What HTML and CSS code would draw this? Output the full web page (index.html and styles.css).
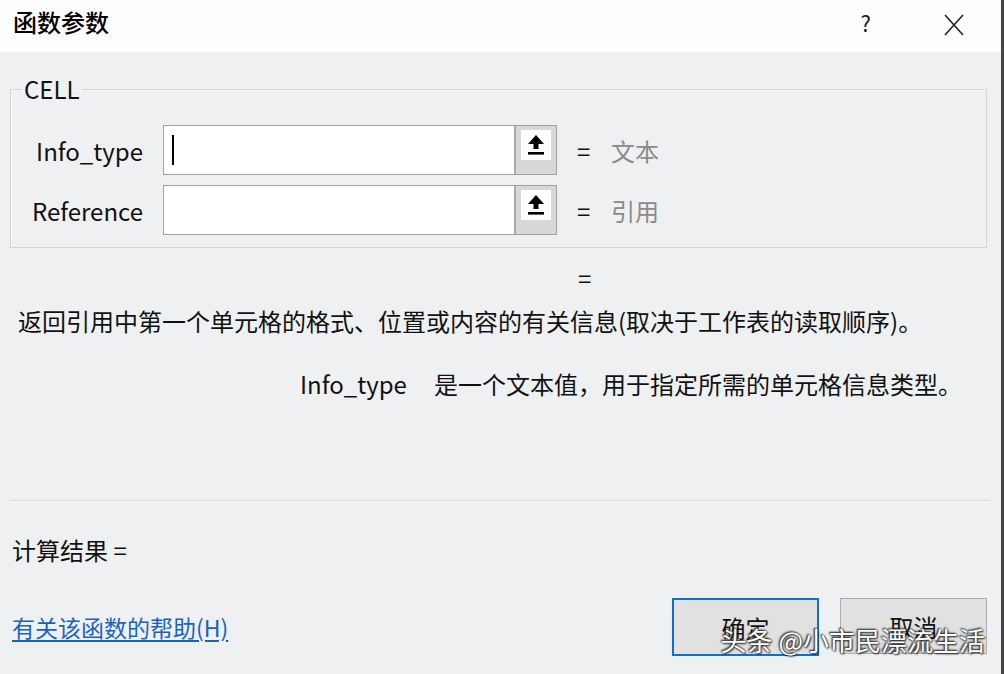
FILE: index.html
```html
<!DOCTYPE html>
<html lang="zh-CN">
<head>
    <meta charset="UTF-8">
    <meta name="viewport" content="width=device-width, initial-scale=1.0">
    <title>函数参数</title>
    <link rel="stylesheet" href="styles.css">
</head>
<body>
    <div class="dialog">
        <div class="titlebar">
            <span class="title">函数参数</span>
            <span class="help">?</span>
            <span class="close">
                <svg width="22" height="22" viewBox="0 0 22 22"><path d="M2 1 L20 21 M20 1 L2 21" stroke="#222" stroke-width="1.6" fill="none"/></svg>
            </span>
        </div>

        <div class="content">
            <fieldset class="args">
                <legend>CELL</legend>
                <div class="row">
                    <label>Info_type</label>
                    <div class="field">
                        <div class="input"><span class="caret"></span></div>
                        <button class="pick"><span class="pick-face">
                            <svg width="18" height="22" viewBox="0 0 18 22"><path d="M9 1 L17 10 L11.5 10 L11.5 15 L6.5 15 L6.5 10 L1 10 Z" fill="#000"/><rect x="1" y="18" width="16" height="2.6" fill="#000"/></svg>
                        </span></button>
                    </div>
                    <span class="eq">=</span>
                    <span class="val">文本</span>
                </div>
                <div class="row">
                    <label>Reference</label>
                    <div class="field">
                        <div class="input"></div>
                        <button class="pick"><span class="pick-face">
                            <svg width="18" height="22" viewBox="0 0 18 22"><path d="M9 1 L17 10 L11.5 10 L11.5 15 L6.5 15 L6.5 10 L1 10 Z" fill="#000"/><rect x="1" y="18" width="16" height="2.6" fill="#000"/></svg>
                        </span></button>
                    </div>
                    <span class="eq">=</span>
                    <span class="val">引用</span>
                </div>
            </fieldset>

            <div class="result-eq">=</div>
            <p class="desc">返回引用中第一个单元格的格式、位置或内容的有关信息(取决于工作表的读取顺序)。</p>
            <p class="arg-desc"><span class="arg-name">Info_type</span><span>是一个文本值，用于指定所需的单元格信息类型。</span></p>

            <div class="sep"></div>

            <div class="calc">计算结果 =</div>

            <div class="footer">
                <a href="#" class="help-link">有关该函数的帮助(H)</a>
                <div class="buttons">
                    <button class="btn btn-ok">确定</button>
                    <button class="btn">取消</button>
                </div>
            </div>

            <div class="watermark">头条 @小市民漂流生活</div>
        </div>
    </div>
</body>
</html>
```

FILE: styles.css
```css
html, body {
    margin: 0;
    padding: 0;
}
body {
    font-family: "Noto Sans CJK SC", "Noto Sans", sans-serif;
    font-size: 24px;
    color: #111;
    background: #eff0f2;
}
.dialog {
    width: 1001px;
    height: 674px;
    border-right: 3px solid #4b4248;
    display: flex;
    flex-direction: column;
    overflow: hidden;
}

/* barra de titulo */
.titlebar {
    height: 52px;
    background: #fefefe;
    display: flex;
    align-items: flex-start;
    padding-top: 7px;
    box-sizing: border-box;
    line-height: 30px;
}
.title {
    margin-left: 13px;
    font-size: 24px;
    font-weight: 500;
    color: #000;
    flex: 1;
}
.help {
    font-size: 22px;
    color: #222;
    margin-right: 72px;
}
.close {
    margin-right: 36px;
    padding-top: 4px;
}

.content {
    flex: 1;
    position: relative;
    background: #eff0f2;
    padding: 0 14px 0 10px;
}

/* grupo de argumentos */
.args {
    margin: 22px 0 0 0;
    padding: 21px 0 12px 0;
    width: 977px;
    box-sizing: border-box;
    border: 1px solid #d3d4d6;
    box-shadow: inset 1px 1px 0 #f8f8f8;
}
.args legend {
    margin-left: 11px;
    padding: 0 2px;
    line-height: 30px;
    font-size: 24px;
    color: #111;
}
.row {
    display: flex;
    align-items: center;
    height: 50px;
}
.row + .row {
    margin-top: 10px;
}
.row label {
    width: 132px;
    text-align: right;
    margin-right: 20px;
}
.field {
    width: 394px;
    height: 50px;
    display: flex;
    box-sizing: border-box;
    border: 1px solid #a2a2a2;
    background: #fff;
}
.input {
    flex: 1;
    display: flex;
    align-items: center;
    padding-left: 8px;
}
.caret {
    width: 2px;
    height: 30px;
    background: #000;
}
.pick {
    width: 42px;
    height: 48px;
    padding: 0;
    border: none;
    border-left: 2px solid #a9a9a9;
    background: #d8d8d9;
    display: flex;
    justify-content: center;
    align-items: flex-start;
}
.pick-face {
    margin-top: 4px;
    width: 30px;
    height: 30px;
    background: #fff;
    display: flex;
    justify-content: center;
    align-items: center;
}
.eq {
    margin-left: 20px;
    width: 34px;
}
.val {
    color: #8a8a8a;
}

.result-eq {
    margin: 15px 0 0 568px;
    line-height: 30px;
}
.desc {
    margin: 13px 0 0 8px;
    line-height: 30px;
}
.arg-desc {
    margin: 33px 0 0 290px;
    line-height: 30px;
}
.arg-name {
    margin-right: 27px;
}

.sep {
    margin-top: 101px;
    width: 980px;
    height: 1px;
    background: #d6d7d9;
    border-bottom: 1px solid #f8f8f8;
}

.calc {
    margin: 33px 0 0 2px;
    line-height: 30px;
}

.footer {
    margin-top: 33px;
    display: flex;
    align-items: center;
    justify-content: space-between;
    height: 58px;
}
.help-link {
    margin-left: 2px;
    font-size: 23px;
    color: #1a63bd;
    text-decoration: underline;
    text-underline-offset: 3px;
}
.buttons {
    display: flex;
    gap: 21px;
    align-items: flex-start;
    height: 58px;
}
.btn {
    width: 147px;
    height: 56px;
    font-family: inherit;
    font-size: 24px;
    color: #111;
    background: #e1e1e1;
    border: 1px solid #adadad;
    padding: 0;
}
.btn-ok {
    height: 58px;
    border: 2px solid #0a70d2;
}

.watermark {
    position: absolute;
    right: 16px;
    bottom: 17px;
    font-size: 26px;
    line-height: 34px;
    color: #fff;
    text-shadow: 0 0 2px #333, 1px 1px 2px #222, -1px -1px 2px #222;
}
```
